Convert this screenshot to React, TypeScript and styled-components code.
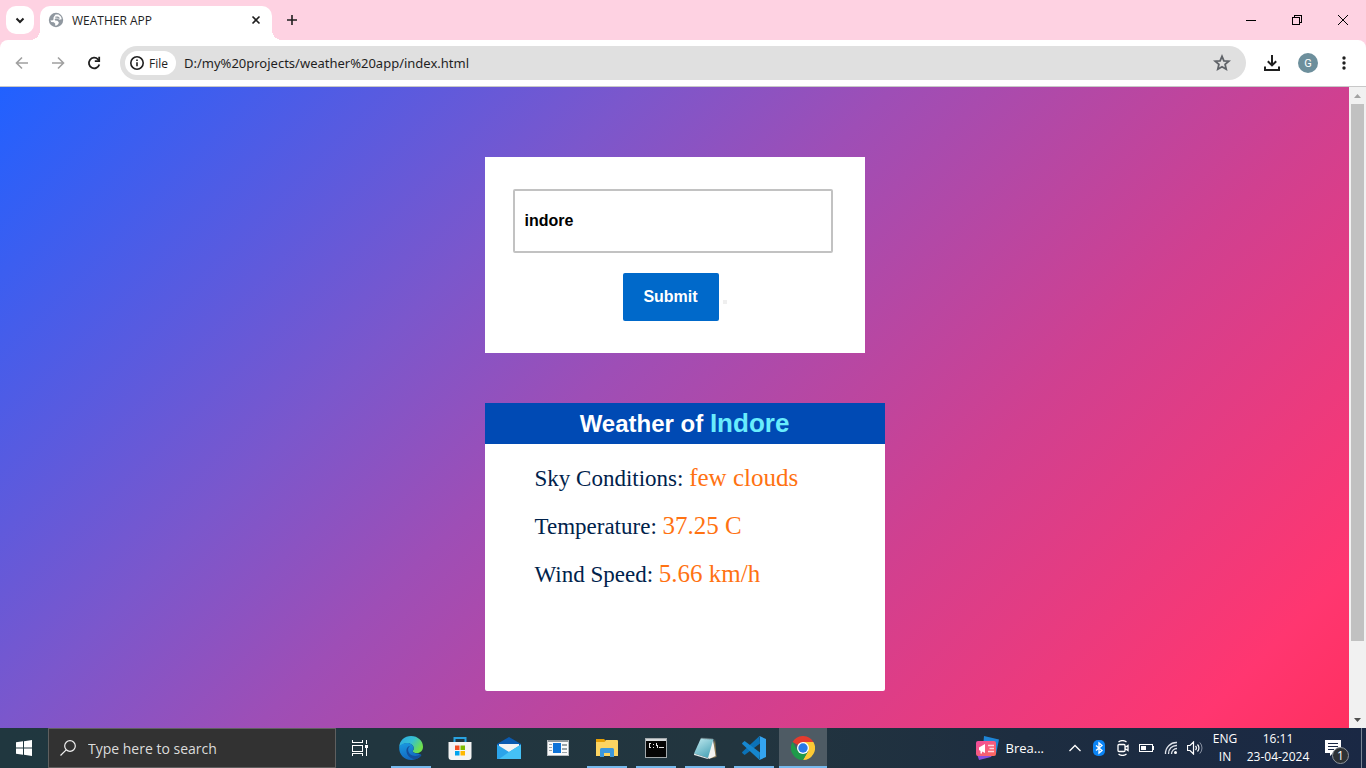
import React, { useState } from "react";
import styled, { createGlobalStyle, css } from "styled-components";

const UI_FONT = `"Segoe UI", "Open Sans", "Noto Sans", sans-serif`;

const GlobalStyle = createGlobalStyle`
  *, *::before, *::after { box-sizing: border-box; }
  body { margin: 0; overflow: hidden; }
  button, input { font: inherit; color: inherit; margin: 0; }
  button { padding: 0; border: 0; background: none; }
  svg { display: block; flex: none; }
`;

const Desktop = styled.div`
  display: flex;
  flex-direction: column;
  height: 100vh;
  font-family: ${UI_FONT};
  font-size: 12px;
  color: #1f1f1f;
  background: #fed2e2;
`;

/* ---------- Browser frame ---------- */

const TabStrip = styled.header`
  display: flex;
  flex: none;
  height: 40px;
  padding: 6px 0 0 6px;
`;

const TabSearch = styled.button`
  display: grid;
  place-items: center;
  width: 28px;
  height: 28px;
  border-radius: 10px;
  background: #fff;
`;

const Tab = styled.div`
  position: relative;
  display: flex;
  align-items: center;
  width: 232px;
  height: 34px;
  margin-left: 6px;
  padding: 0 8px;
  padding-bottom: 6px;
  border-radius: 10px 10px 0 0;
  background: #fff;

  &::before,
  &::after {
    content: "";
    position: absolute;
    bottom: 0;
    width: 10px;
    height: 10px;
  }
  &::before {
    right: 100%;
    background: radial-gradient(circle at 0 0, transparent 10px, #fff 10px);
  }
  &::after {
    left: 100%;
    background: radial-gradient(circle at 100% 0, transparent 10px, #fff 10px);
  }
`;

const TabTitle = styled.span`
  flex: 1;
  margin-left: 8px;
`;

const StripButton = styled.button`
  display: grid;
  place-items: center;
  width: 16px;
  height: 16px;
`;

const NewTab = styled(StripButton)`
  width: 28px;
  height: 28px;
  margin-left: 6px;
`;

const WindowControls = styled.div`
  display: flex;
  height: 28px;
  margin-left: auto;
`;

const WindowButton = styled.button`
  display: grid;
  place-items: center;
  width: 46px;
`;

const Toolbar = styled.div`
  display: flex;
  flex: none;
  align-items: center;
  gap: 8px;
  height: 47px;
  padding: 0 8px;
  border-bottom: 1px solid #c8c8c8;
  border-radius: 8px 8px 0 0;
  background: #fff;
`;

const ToolButton = styled.button`
  display: grid;
  place-items: center;
  width: 28px;
  height: 28px;
`;

const Omnibox = styled.div`
  display: flex;
  flex: 1;
  align-items: center;
  height: 34px;
  margin: 0 4px;
  padding: 0 14px 0 5px;
  border-radius: 17px;
  background: #e0e0e0;
`;

const FileChip = styled.button`
  display: flex;
  align-items: center;
  gap: 4px;
  height: 24px;
  padding: 0 8px 0 4px;
  border-radius: 12px;
  background: #fff;
`;

const AddressInput = styled.input`
  flex: 1;
  min-width: 0;
  margin-left: 8px;
  padding: 0;
  border: 0;
  outline: 0;
  background: transparent;
  font-family: "Noto Sans", sans-serif;
  font-size: 13px;
`;

const Avatar = styled.span`
  display: grid;
  place-items: center;
  width: 20px;
  height: 20px;
  border-radius: 50%;
  background: #6d8f9c;
  color: #fff;
  font-family: Roboto, sans-serif;
  font-size: 11px;
`;

/* ---------- Weather page ---------- */

const Viewport = styled.div`
  display: flex;
  flex: 1;
  min-height: 0;
`;

const Page = styled.main`
  flex: 1;
  min-width: 0;
  overflow: hidden;
  padding-top: 70px;
  background: linear-gradient(
    135deg,
    #2161ff 0%,
    #7b57cc 32%,
    #9e4eb6 45%,
    #d04090 68%,
    #ff3670 92%,
    #ff3060 100%
  );
`;

const Content = styled.div`
  width: 380px;
  margin: 0 auto;
`;

const SearchForm = styled.form`
  padding: 32px 28px;
  background: #fff;
`;

const CityInput = styled.input`
  display: block;
  width: 320px;
  height: 64px;
  padding: 0 10px;
  border: 2px solid #c2c2c2;
  border-radius: 2px;
  outline: 0;
  background: #fff;
  color: #000;
  font: bold 16px "Liberation Sans", Arial, sans-serif;
`;

const FormActions = styled.div`
  display: flex;
  align-items: center;
  justify-content: center;
  gap: 4px;
  margin-top: 20px;
`;

const SubmitButton = styled.button`
  width: 96px;
  height: 48px;
  border-radius: 2px;
  background: #0069ca;
  color: #fff;
  font: bold 16px "Liberation Sans", Arial, sans-serif;
`;

const EmptyMark = styled.span`
  width: 4px;
  height: 4px;
  margin-top: 10px;
  background: #efefef;
`;

const ResultCard = styled.section`
  width: 400px;
  min-height: 288px;
  margin-top: 50px;
  border-radius: 2px;
  background: #fff;
`;

const ResultTitle = styled.h2`
  margin: 0;
  height: 41px;
  background: #004ab4;
  color: #fff;
  font: bold 24px/41px "Liberation Sans", Arial, sans-serif;
  text-align: center;
`;

const City = styled.span`
  color: #68edfd;
  font-size: 26px;
`;

const Facts = styled.div`
  padding: 10px 50px;
`;

const Fact = styled.p`
  margin: 0;
  height: 48px;
  color: #00224b;
  font: 23px/48px "Liberation Serif", "Times New Roman", serif;
`;

const FactValue = styled.span`
  color: #ff7212;
  font-size: 25px;
`;

const Scrollbar = styled.div`
  display: flex;
  flex-direction: column;
  flex: none;
  align-items: center;
  width: 17px;
  background: #f1f1f1;
`;

const ScrollArrow = styled.button`
  display: grid;
  place-items: center;
  width: 17px;
  height: 17px;
`;

const ScrollTrack = styled.div`
  display: grid;
  grid-template-rows: 23fr 3fr;
  flex: 1;
  width: 13px;
`;

const ScrollThumb = styled.div`
  background: #c1c1c1;
`;

/* ---------- Taskbar ---------- */

const Taskbar = styled.footer`
  display: flex;
  flex: none;
  height: 40px;
  background: linear-gradient(90deg, #20373f 0%, #22353f 55%, #1d2d40 75%, #1a2844 100%);
  color: #fff;
`;

const TaskButton = styled.button<{ $state?: "running" | "active" }>`
  display: grid;
  place-items: center;
  flex: none;
  width: 48px;
  height: 40px;
  ${(p) =>
    p.$state === "running" &&
    css`
      background: linear-gradient(#76b9ed, #76b9ed) center bottom / 40px 2px no-repeat;
    `}
  ${(p) =>
    p.$state === "active" &&
    css`
      background: linear-gradient(#76b9ed, #76b9ed) center bottom / 48px 2px no-repeat, #4e5b64;
    `}
`;

const TaskSearch = styled.label`
  display: flex;
  align-items: center;
  gap: 12px;
  width: 288px;
  padding: 0 11px;
  border: 1px solid #5f5f5f;
  background: #323232;
`;

const TaskSearchInput = styled.input`
  flex: 1;
  min-width: 0;
  padding: 0;
  border: 0;
  outline: 0;
  background: transparent;
  font-size: 14px;
  &::placeholder {
    color: #dcdcdc;
    opacity: 1;
  }
`;

const Apps = styled.nav`
  display: flex;
  gap: 1px;
  margin-left: 3px;
`;

const Tray = styled.div`
  display: flex;
  align-items: center;
  margin-left: auto;
`;

const NewsButton = styled.button`
  display: flex;
  align-items: center;
  gap: 7px;
  margin-right: 19px;
  font-size: 13px;
`;

const TrayButton = styled.button`
  display: grid;
  place-items: center;
  width: 24px;
  height: 40px;
`;

const TrayText = styled.button<{ $width: number }>`
  width: ${(p) => p.$width}px;
  font-size: 12px;
  line-height: 18px;
  text-align: center;
`;

const NoticeButton = styled.button`
  display: flex;
  align-items: center;
  width: 36px;
  height: 40px;
`;

const Notice = styled.span`
  position: relative;
`;

const NoticeCount = styled.span`
  position: absolute;
  left: 7px;
  top: 7px;
  display: grid;
  place-items: center;
  width: 17px;
  height: 17px;
  border: 1px solid #8f959b;
  border-radius: 50%;
  background: #2d3235;
  font-size: 12px;
  line-height: 15px;
`;

const ShowDesktop = styled.button`
  width: 5px;
  height: 40px;
  border-left: 1px solid #7a8594;
`;

/* ---------- Icons ---------- */

const Glyph = ({
  size = 20,
  width = size,
  height = size,
  stroke = 2,
  color = "#1f1f1f",
  crisp = false,
  children,
}: {
  size?: number;
  width?: number;
  height?: number;
  stroke?: number;
  color?: string;
  crisp?: boolean;
  children: React.ReactNode;
}) => (
  <svg
    width={width}
    height={height}
    viewBox={`0 0 ${width} ${height}`}
    fill="none"
    stroke={color}
    strokeWidth={stroke}
    shapeRendering={crisp ? "crispEdges" : undefined}
    aria-hidden="true"
  >
    {children}
  </svg>
);

const GlobeIcon = () => (
  <Glyph size={16} color="none">
    <circle cx="8" cy="8" r="7.2" fill="#9098a0" />
    <path d="M7.500 2.600 10.500 2.400l2.600 2.300.6 2.500-2.500.6-1.500-1.300-2.300-.1-.8 1 .6 1 2.200.4 1.400 1.500-.4 1.600-1.800 1.600H7l.3-1.700-1.500-1.500-2.600-.4-.8-1.700 1.700.4 1.300-.9.200-2.400Z" fill="#fff" />
    <path d="M7.500 4.500h2.600l2 1.800-1.600.4-1.300-.9H7.200Z" fill="#9098a0" />
  </Glyph>
);

const EdgeIcon = () => (
  <svg width="26" height="26" viewBox="0 0 26 26" aria-hidden="true">
    <defs>
      <linearGradient id="edgeTop" x1="0" y1="0" x2="1" y2="0.5">
        <stop offset="0" stopColor="#2aa9e4" />
        <stop offset="0.55" stopColor="#36bfd2" />
        <stop offset="1" stopColor="#6fe04b" />
      </linearGradient>
      <linearGradient id="edgeLeft" x1="0" y1="0" x2="0.4" y2="1">
        <stop offset="0" stopColor="#1a9be2" />
        <stop offset="1" stopColor="#1268bf" />
      </linearGradient>
    </defs>
    <path d="M1.200 12C1.500 5.600 6.600 1 13 1c7 0 12 5 12 10.700 0 4-2.800 6.300-6.300 6.300-2.300 0-4-.8-4-1.800 0-.7 1-1.200 1-3 0-2.600-2.400-5-6.200-5C5.500 8.200 2.500 10.200 1.200 12Z" fill="url(#edgeTop)" />
    <path d="M1.200 12C2.500 9.500 5.500 8 9.200 8c3.600 0 6.300 2.200 6.500 5 0 1.800-1 2.500-1 3.200 0 1.200 1.800 2.300 5.300 2.300l3.500 1.500c-1.400 2-3.500 3.600-6.100 4.300-1.300.4-2.600.6-4 .6C6 25 .8 19.500 1.200 12Z" fill="url(#edgeLeft)" />
    <path d="M12.500 10.800c-1.700 1-2.700 2.500-2.300 5 .6 3.200 3.500 5.400 7.300 5.200 2-.1 3.400-.6 4.700-1.400.6-.4 1.200 0 .8.600-1.400 2-3.300 3.400-5.600 4.100-4.500-.1-9-3.900-9-8.800 0-2.400 1.700-4.400 4.100-4.700Z" fill="#134f9c" />
  </svg>
);

const StoreIcon = () => (
  <svg width="24" height="24" viewBox="0 0 24 24" aria-hidden="true">
    <path d="M6.500 6V2h11v4" fill="none" stroke="#29a3e0" strokeWidth="2" />
    <path d="M0.500 6h23v15a3 3 0 0 1-3 3h-17a3 3 0 0 1-3-3Z" fill="#f4f4f4" />
    <path d="M7 9.500h4.500V14H7z" fill="#f25022" />
    <path d="M12.500 9.500H17V14h-4.500z" fill="#7fba00" />
    <path d="M7 15h4.500v4.500H7z" fill="#00a4ef" />
    <path d="M12.500 15H17v4.500h-4.500z" fill="#ffb900" />
  </svg>
);

const MailIcon = () => (
  <svg width="24" height="24" viewBox="0 0 24 24" aria-hidden="true">
    <path d="M0 8 12 1l12 7v3H0Z" fill="#0a5ab0" />
    <path d="M2 8h20v4l-10 6-10-6Z" fill="#f3f3f3" />
    <path d="M0 8.500 12 16l12-7.500V23H0Z" fill="#2ba4ea" />
    <path d="M24 8.500V23H2l10-7Z" fill="#45c1f5" />
  </svg>
);

const PanelIcon = () => (
  <svg width="22" height="18" viewBox="0 0 22 18" aria-hidden="true" shapeRendering="crispEdges">
    <path d="M0 1h22v16H0z" fill="#fafafa" />
    <path d="M0 1h22v2H0z" fill="#8f979c" />
    <path d="M0 1h1v16H0zM21 1h1v16h-1zM0 16h22v1H0z" fill="#b5bbbf" />
    <path d="M6 4h8v10H6z" fill="#0f73d8" />
    <path d="M2 5h3v1H2zM2 8h3v1H2zM2 11h3v1H2zM15 5h5v2h-5zM15 9h5v2h-5zM15 13h5v1h-5z" fill="#9aa3a8" />
  </svg>
);

const ExplorerIcon = () => (
  <svg width="22" height="20" viewBox="0 0 22 20" aria-hidden="true">
    <path d="M0 1h8l2 2h-1v4H0Z" fill="#e59f06" />
    <path d="M0 4h8.500L10 2h11a1 1 0 0 1 1 1v15H0Z" fill="#fcd462" />
    <path d="M4 19v-7.500A1.500 1.500 0 0 1 5.500 10h11a1.500 1.500 0 0 1 1.500 1.500V19h-4v-4H8v4Z" fill="#3c97dc" />
  </svg>
);

const TerminalIcon = () => (
  <svg width="22" height="20" viewBox="0 0 22 20" aria-hidden="true" shapeRendering="crispEdges">
    <path d="M0 0h22v20H0z" fill="#a3a9ac" />
    <path d="M1 1h20v2H1z" fill="#d5d9db" />
    <path d="M1 3h20v16H1z" fill="#050505" />
    <path d="M4 6v4M4 5.500h2M4 9.500h2M8.500 6v1M8.500 9v1M11 5l2 5M14 9.500h5" stroke="#e6e6e6" fill="none" />
  </svg>
);

const NotepadIcon = () => (
  <svg width="24" height="24" viewBox="0 0 24 24" aria-hidden="true">
    <defs>
      <linearGradient id="pad" x1="0" y1="0" x2="0.6" y2="1">
        <stop offset="0" stopColor="#c5edf2" />
        <stop offset="1" stopColor="#4fa6b9" />
      </linearGradient>
    </defs>
    <path d="M22 3l1.500 18-6 1.500Z" fill="#8b7a55" />
    <path d="M20 3l2.500 17-6.500 3L13 20Z" fill="#f3f3f0" />
    <path d="M8 2 20.500 3 15 22 1 17.500Z" fill="url(#pad)" />
    <path d="m1 17.500 14 4.500-.3 1L1 19Z" fill="#dfe7e8" />
    <path d="M8.500 2.200 20.500 3" stroke="#5c676b" strokeWidth="1.500" strokeDasharray="1 1" />
  </svg>
);

const CodeIcon = () => (
  <svg width="24" height="24" viewBox="0 0 24 24" aria-hidden="true">
    <path d="M17.500 0 18 7.500 3.300 18.600a1 1 0 0 1-1.300 0L.5 17.200a1 1 0 0 1 0-1.500Z" fill="#0b72b8" />
    <path d="M17.500 24 18 16.500 3.300 5.400a1 1 0 0 0-1.300 0L.5 6.800a1 1 0 0 0 0 1.500Z" fill="#1687cf" />
    <path d="M17.500 0 24 3v18l-6.500 3c-.6 0-.9-.3-1.100-.5.900.6 1.600.2 1.600-.9V1.400c0-1.100-.8-1.500-1.600-.9.200-.2.500-.5 1.100-.5Z" fill="#34a4f0" />
  </svg>
);

const ChromeIcon = () => (
  <svg width="24" height="24" viewBox="0 0 24 24" aria-hidden="true">
    <path d="M12 12 1.600 6A12 12 0 0 1 22.400 6Z" fill="#e33b2e" />
    <path d="M12 12V6h10.400A12 12 0 0 1 12 24l5.200-9Z" fill="#fcc934" />
    <path d="M1.600 6 6.800 15l5.200 3 5.200-3L12 24A12 12 0 0 1 1.600 6Z" fill="#1e9a4a" />
    <circle cx="12" cy="12" r="6" fill="#fff" />
    <circle cx="12" cy="12" r="4.700" fill="#2979e8" />
  </svg>
);

const NewsIcon = () => (
  <svg width="24" height="24" viewBox="0 0 24 24" aria-hidden="true">
    <defs>
      <linearGradient id="news" x1="0" y1="0" x2="1" y2="1">
        <stop offset="0" stopColor="#f04ba0" />
        <stop offset="1" stopColor="#fb6a5b" />
      </linearGradient>
    </defs>
    <path d="M9 0 24 3.500 21 18 8 12Z" fill="#1e86d8" />
    <path d="M2 18h16l-2 3-12 3Z" fill="#8a4fe0" />
    <rect x="1" y="5" width="20" height="15" rx="2" fill="url(#news)" />
    <path d="M4 11.500 10 8v9l-3-1.500v2H5.500V15L4 14Z" fill="#fff" />
    <path d="M13 9.500h6M14.500 12.500H19M13 15.500h6" stroke="#ffd5de" strokeWidth="1.300" />
  </svg>
);

const BluetoothIcon = () => (
  <svg width="12" height="16" viewBox="0 0 12 16" aria-hidden="true">
    <rect width="12" height="16" rx="5" fill="#0a84f5" />
    <path d="m3 5.500 6 5L6 13V3l3 2.500-6 5" fill="none" stroke="#fff" strokeWidth="1.300" />
  </svg>
);

const apps: { name: string; icon: React.ReactNode; state?: "running" | "active" }[] = [
  { name: "Microsoft Edge", icon: <EdgeIcon />, state: "running" },
  { name: "Microsoft Store", icon: <StoreIcon /> },
  { name: "Mail", icon: <MailIcon /> },
  { name: "News panel", icon: <PanelIcon /> },
  { name: "File Explorer", icon: <ExplorerIcon />, state: "running" },
  { name: "Command Prompt", icon: <TerminalIcon />, state: "running" },
  { name: "Notepad", icon: <NotepadIcon />, state: "running" },
  { name: "Visual Studio Code", icon: <CodeIcon />, state: "running" },
  { name: "Google Chrome", icon: <ChromeIcon />, state: "active" },
];

const facts = [
  { label: "Sky Conditions", value: "few clouds" },
  { label: "Temperature", value: "37.25 C" },
  { label: "Wind Speed", value: "5.66 km/h" },
];

function BrowserChrome() {
  return (
    <>
      <TabStrip>
        <TabSearch aria-label="Search tabs">
          <Glyph size={10}>
            <path d="m1.500 3.500 3.500 3.500 3.500-3.500" />
          </Glyph>
        </TabSearch>
        <Tab>
          <GlobeIcon />
          <TabTitle>WEATHER APP</TabTitle>
          <StripButton aria-label="Close tab">
            <Glyph size={10}>
              <path d="m1.500 1.500 7 7m0-7-7 7" strokeWidth="1.600" />
            </Glyph>
          </StripButton>
        </Tab>
        <NewTab aria-label="New tab">
          <Glyph size={12}>
            <path d="M6 1v10M1 6h10" strokeWidth="1.600" />
          </Glyph>
        </NewTab>
        <WindowControls>
          <WindowButton aria-label="Minimize">
            <Glyph size={10} stroke={1} color="#000" crisp>
              <path d="M0 5.500h10" />
            </Glyph>
          </WindowButton>
          <WindowButton aria-label="Restore">
            <Glyph size={10} stroke={1} color="#000" crisp>
              <path d="M.5 2.500h7v7h-7zM2.500 2.500v-2h7v7h-2" />
            </Glyph>
          </WindowButton>
          <WindowButton aria-label="Close">
            <Glyph size={10} stroke={1} color="#000">
              <path d="m0 0 10 10M10 0 0 10" />
            </Glyph>
          </WindowButton>
        </WindowControls>
      </TabStrip>
      <Toolbar>
        <ToolButton aria-label="Back">
          <Glyph size={14} color="#a0a0a0">
            <path d="M13 7H2M7 1.500 1.500 7 7 12.500" strokeWidth="1.600" />
          </Glyph>
        </ToolButton>
        <ToolButton aria-label="Forward">
          <Glyph size={14} color="#a0a0a0">
            <path d="M1 7h11M7 1.500 12.500 7 7 12.500" strokeWidth="1.600" />
          </Glyph>
        </ToolButton>
        <ToolButton aria-label="Reload">
          <Glyph size={14}>
            <path d="M12.300 8.500A5.300 5.300 0 1 1 11 3.300L12.300 5" strokeWidth="1.800" />
            <path d="M12.200.8v4.400H7.800" strokeWidth="1.800" />
          </Glyph>
        </ToolButton>
        <Omnibox>
          <FileChip>
            <Glyph size={16}>
              <circle cx="8" cy="8" r="6.200" strokeWidth="1.600" />
              <path d="M8 7.200v4M8 4.500v1.500" strokeWidth="1.600" />
            </Glyph>
            File
          </FileChip>
          <AddressInput aria-label="Address" defaultValue="D:/my%20projects/weather%20app/index.html" />
          <Glyph size={20} color="#5f6368">
            <path d="m10 3.300 1.900 4.500 4.900.4-3.700 3.200 1.100 4.800L10 13.700l-4.200 2.500 1.100-4.800-3.700-3.200 4.900-.4Z" strokeWidth="1.800" />
          </Glyph>
        </Omnibox>
        <ToolButton aria-label="Downloads">
          <Glyph size={16}>
            <path d="M8 0v10M3.800 6.200 8 10.400l4.200-4.200M1 11.500V15h14v-3.500" />
          </Glyph>
        </ToolButton>
        <ToolButton aria-label="Profile">
          <Avatar>G</Avatar>
        </ToolButton>
        <ToolButton aria-label="Menu">
          <Glyph size={16} color="none">
            <g fill="#1f1f1f">
              <circle cx="8" cy="3" r="1.700" />
              <circle cx="8" cy="8" r="1.700" />
              <circle cx="8" cy="13" r="1.700" />
            </g>
          </Glyph>
        </ToolButton>
      </Toolbar>
    </>
  );
}

function WeatherPage() {
  const [city, setCity] = useState("indore");
  return (
    <Viewport>
      <Page>
        <Content>
          <SearchForm onSubmit={(e) => e.preventDefault()}>
            <CityInput aria-label="City" value={city} onChange={(e) => setCity(e.target.value)} />
            <FormActions>
              <SubmitButton type="submit">Submit</SubmitButton>
              <EmptyMark />
            </FormActions>
          </SearchForm>
          <ResultCard>
            <ResultTitle>
              Weather of <City>Indore</City>
            </ResultTitle>
            <Facts>
              {facts.map((f) => (
                <Fact key={f.label}>
                  {f.label}: <FactValue>{f.value}</FactValue>
                </Fact>
              ))}
            </Facts>
          </ResultCard>
        </Content>
      </Page>
      <Scrollbar>
        <ScrollArrow aria-label="Scroll up">
          <Glyph width={7} height={4} color="none">
            <path d="M0 4 3.500 0 7 4Z" fill="#a3a3a3" />
          </Glyph>
        </ScrollArrow>
        <ScrollTrack>
          <ScrollThumb />
        </ScrollTrack>
        <ScrollArrow aria-label="Scroll down">
          <Glyph width={7} height={4} color="none">
            <path d="M0 0 3.500 4 7 0Z" fill="#505050" />
          </Glyph>
        </ScrollArrow>
      </Scrollbar>
    </Viewport>
  );
}

function WindowsTaskbar() {
  return (
    <Taskbar>
      <TaskButton aria-label="Start">
        <Glyph size={16} color="none">
          <path d="M0 2.300 7 1.300v6.200H0zM8 1.200 16 0v7.500H8zM0 8.500h7v6.200l-7-1zM8 8.500h8V16l-8-1.200z" fill="#fff" />
        </Glyph>
      </TaskButton>
      <TaskSearch>
        <Glyph size={16} stroke={1} color="#f0f0f0">
          <circle cx="10" cy="6" r="5.300" strokeWidth="1.200" />
          <path d="M6.200 9.800.5 15.500" strokeWidth="1.200" />
        </Glyph>
        <TaskSearchInput aria-label="Search" placeholder="Type here to search" />
      </TaskSearch>
      <TaskButton aria-label="Task view">
        <Glyph size={16} stroke={1} color="#fff" crisp>
          <path d="M.5 0v2.500h10V0M.5 5.500h10v6H.5zM.5 16v-2.500h10V16M14.500 0v4M14.500 8v8" />
          <path d="M13 5h3v3h-3z" fill="#fff" stroke="none" />
        </Glyph>
      </TaskButton>
      <Apps>
        {apps.map((a) => (
          <TaskButton key={a.name} aria-label={a.name} $state={a.state}>
            {a.icon}
          </TaskButton>
        ))}
      </Apps>
      <Tray>
        <NewsButton>
          <NewsIcon />
          Brea...
        </NewsButton>
        <TrayButton aria-label="Show hidden icons">
          <Glyph width={12} height={8} stroke={1} color="#fff">
            <path d="m.5 7 5.500-5.500L11.500 7" strokeWidth="1.300" />
          </Glyph>
        </TrayButton>
        <TrayButton aria-label="Bluetooth">
          <BluetoothIcon />
        </TrayButton>
        <TrayButton aria-label="Meet now">
          <Glyph width={12} height={16} stroke={1} color="#fff">
            <path
              d="M1 5.500a1 1 0 0 1 1-1h5a1 1 0 0 1 1 1v5a1 1 0 0 1-1 1H2a1 1 0 0 1-1-1ZM8 7.500l3-2v5l-3-2M1.500 2C4 .2 7 .2 9.500 2M1.500 14c2.500 1.800 5.500 1.800 8 0"
              strokeWidth="1.300"
            />
          </Glyph>
        </TrayButton>
        <TrayButton aria-label="Battery">
          <Glyph width={16} height={10} stroke={1} color="#fff" crisp>
            <path d="M.5 1.500h13v7H.5zM14.500 3v4" />
            <path d="M2 3h5v4H2z" fill="#fff" stroke="none" />
          </Glyph>
        </TrayButton>
        <TrayButton aria-label="Network">
          <Glyph size={14} stroke={1} color="#dfe3ea">
            <path
              d="M1.500 13A11 11 0 0 1 13 1.500M4.500 13A8 8 0 0 1 13 4.500M7.500 13A5.500 5.500 0 0 1 13 7.500"
              strokeWidth="1.300"
            />
            <circle cx="11.500" cy="11.500" r="1.500" fill="#fff" stroke="none" />
          </Glyph>
        </TrayButton>
        <TrayButton aria-label="Volume">
          <Glyph width={16} height={14} stroke={1} color="#fff">
            <path
              d="M.5 4.500H3L6.500 1v12L3 9.500H.5zM8.500 5a3 3 0 0 1 0 4M10.500 3.500a5 5 0 0 1 0 7"
              strokeWidth="1.200"
            />
            <path d="M12.800 1.500a8 8 0 0 1 0 11" stroke="#8992a3" />
          </Glyph>
        </TrayButton>
        <TrayText $width={36}>
          ENG
          <br />
          IN
        </TrayText>
        <TrayText $width={70}>
          16:11
          <br />
          23-04-2024
        </TrayText>
        <TrayText as="span" $width={12} />
        <NoticeButton aria-label="Notifications, 1 new">
          <Notice>
            <Glyph size={16} color="none">
              <path d="M0 0h16v13h-8l-3 3v-3H0z" fill="#fff" />
              <path d="M3 3.500h10M3 6.500h10M3 9.500h6" stroke="#1a2844" strokeWidth="1" />
            </Glyph>
            <NoticeCount>1</NoticeCount>
          </Notice>
        </NoticeButton>
        <ShowDesktop aria-label="Show desktop" />
      </Tray>
    </Taskbar>
  );
}

export default function App() {
  return (
    <Desktop>
      <GlobalStyle />
      <BrowserChrome />
      <WeatherPage />
      <WindowsTaskbar />
    </Desktop>
  );
}
